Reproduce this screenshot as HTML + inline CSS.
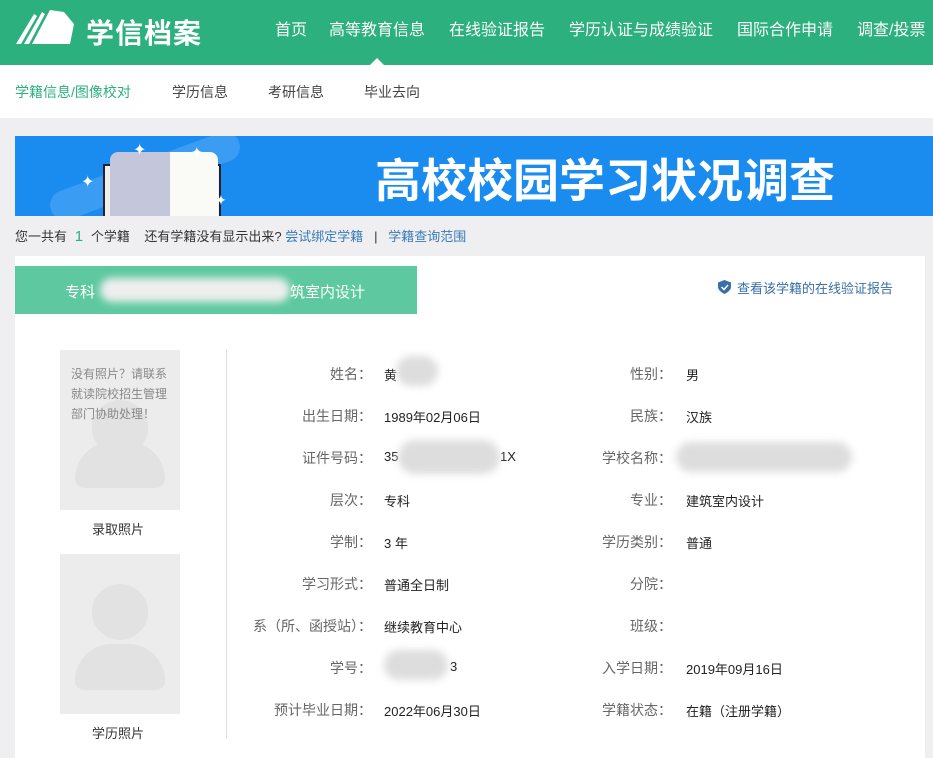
<!DOCTYPE html>
<html><head><meta charset="utf-8"><style>
*{margin:0;padding:0;box-sizing:border-box}
body{width:933px;height:758px;overflow:hidden;background:#efeff1;font-family:"Liberation Sans","Noto Sans CJK SC",sans-serif;position:relative;color:#333}
.a{position:absolute;white-space:nowrap}
#hd{left:0;top:0;width:933px;height:65px;background:#2bb07e}
#sub{left:0;top:65px;width:933px;height:53px;background:#fff}
.nav{top:16px;color:#fff;font-size:16px}
.s{top:82px;font-size:14px;color:#444}
#ban{left:15px;top:136px;width:918px;height:80px;background:#1a8cf0;overflow:hidden}
#card{left:15px;top:256px;width:910px;height:502px;background:#fff}
.l{font-size:14px;color:#666;text-align:right;width:150px}
.v{font-size:13px;color:#222}
.blur{background:#ddd;border-radius:20px;filter:blur(4px)}
.ph{width:120px;height:160px;background:#ececec;overflow:hidden}
</style></head><body>
<div id="hd" class="a">
<svg class="a" style="left:14px;top:8px" width="62" height="40" viewBox="0 0 62 40"><path d="M2 36 L20 6 L23 8 L7 36Z M10 36 L28 4 L31 6 L15 36Z M18 36 L36 2 L50 4 L60 16 L56 36Z" fill="#fff"/></svg>
<div class="a" style="left:86px;top:12px;font-size:28px;color:#fff;font-weight:bold;letter-spacing:1px">学信档案</div>
<div class="a nav" style="left:275px">首页</div>
<div class="a nav" style="left:329px">高等教育信息</div>
<div class="a nav" style="left:449px">在线验证报告</div>
<div class="a nav" style="left:569px">学历认证与成绩验证</div>
<div class="a nav" style="left:737px">国际合作申请</div>
<div class="a nav" style="left:857px">调查/投票</div>
</div>
<div class="a" style="left:370px;top:58px;width:0;height:0;border:7px solid transparent;border-bottom-color:#fff;border-top:0"></div>
<div id="sub" class="a"></div>
<div class="a s" style="left:15px;color:#2bb07e">学籍信息/图像校对</div>
<div class="a s" style="left:172px">学历信息</div>
<div class="a s" style="left:268px">考研信息</div>
<div class="a s" style="left:364px">毕业去向</div>
<div id="ban" class="a">
<div class="a" style="left:30px;top:25px;width:200px;height:30px;background:#3b9cf3;transform:rotate(-20deg);border-radius:15px"></div>
<div class="a" style="left:88px;top:28px;width:118px;height:60px;background:#f2f0e8;border:2px solid #223"></div>
<div class="a" style="left:95px;top:16px;width:60px;height:66px;background:#c4c6dc;border-radius:8px 0 0 0"></div>
<div class="a" style="left:155px;top:16px;width:48px;height:66px;background:#fafaf6;border-radius:0 8px 0 0"></div>
<div class="a" style="left:66px;top:36px;color:#fff;font-size:16px">✦</div>
<div class="a" style="left:118px;top:4px;color:#fff;font-size:16px">✦</div>
<div class="a" style="left:176px;top:8px;color:#fff;font-size:14px">✦</div>
<div class="a" style="left:200px;top:56px;color:#fff;font-size:14px">✦</div>
<div class="a" style="left:360px;top:9px;font-size:46px;font-weight:bold;color:#fff;letter-spacing:0px">高校校园学习状况调查</div>
</div>
<div class="a" style="left:15px;top:226px;font-size:13px;color:#333">您一共有 <span style="color:#2bb07e;font-size:15px">&nbsp;1&nbsp;</span> 个学籍 &nbsp;&nbsp;&nbsp;还有学籍没有显示出来? <span style="color:#3a7bb5">尝试绑定学籍</span> &nbsp;&nbsp;| &nbsp;&nbsp;<span style="color:#3a7bb5">学籍查询范围</span></div>
<div id="card" class="a"></div>
<div class="a" style="left:15px;top:266px;width:402px;height:48px;background:#5ec9a0"></div>
<div class="a" style="left:65px;top:281px;font-size:15px;color:#fff">专科</div>
<div class="a blur" style="left:100px;top:278px;width:190px;height:24px;background:#eee"></div>
<div class="a" style="left:290px;top:281px;font-size:15px;color:#fff">筑室内设计</div>
<svg class="a" style="left:718px;top:280px" width="13" height="14" viewBox="0 0 13 14"><path d="M6.5 0L13 2.5V7C13 11 6.5 14 6.5 14S0 11 0 7V2.5Z" fill="#3a6fa8"/><path d="M3.5 7L6 9.5L10 5" stroke="#fff" stroke-width="1.5" fill="none"/></svg>
<div class="a" style="left:737px;top:278px;font-size:13px;color:#3a6fa8">查看该学籍的在线验证报告</div>
<div class="a ph" style="left:60px;top:350px"><div class="a" style="left:32px;top:50px;width:56px;height:56px;border-radius:50%;background:#e2e2e2"></div><div class="a" style="left:15px;top:92px;width:90px;height:46px;border-radius:40px 40px 10px 10px;background:#e2e2e2"></div><div class="a" style="left:11px;top:14px;font-size:12px;line-height:20px;color:#888;white-space:normal;width:105px">没有照片？请联系就读院校招生管理部门协助处理！</div></div>
<div class="a" style="left:92px;top:519px;font-size:13px">录取照片</div>
<div class="a ph" style="left:60px;top:554px"><div class="a" style="left:32px;top:30px;width:56px;height:56px;border-radius:50%;background:#e2e2e2"></div><div class="a" style="left:15px;top:90px;width:90px;height:46px;border-radius:40px 40px 10px 10px;background:#e2e2e2"></div></div>
<div class="a" style="left:92px;top:723px;font-size:13px">学历照片</div>
<div class="a" style="left:226px;top:350px;width:1px;height:388px;background:#ddd"></div>

<div class="a l" style="left:222px;top:364px">姓名：</div><div class="a v" style="left:384px;top:365px">黄</div><div class="a blur" style="left:396px;top:356px;width:42px;height:30px"></div>
<div class="a l" style="left:222px;top:406px">出生日期：</div><div class="a v" style="left:384px;top:407px">1989年02月06日</div>
<div class="a l" style="left:222px;top:448px">证件号码：</div><div class="a v" style="left:384px;top:449px">35</div><div class="a v" style="left:500px;top:449px">1X</div><div class="a blur" style="left:398px;top:440px;width:102px;height:34px"></div>
<div class="a l" style="left:222px;top:490px">层次：</div><div class="a v" style="left:384px;top:491px">专科</div>
<div class="a l" style="left:222px;top:532px">学制：</div><div class="a v" style="left:384px;top:533px">3 年</div>
<div class="a l" style="left:222px;top:574px">学习形式：</div><div class="a v" style="left:384px;top:575px">普通全日制</div>
<div class="a l" style="left:222px;top:616px">系（所、函授站）：</div><div class="a v" style="left:384px;top:617px">继续教育中心</div>
<div class="a l" style="left:222px;top:658px">学号：</div><div class="a v" style="left:450px;top:659px">3</div><div class="a blur" style="left:384px;top:650px;width:64px;height:30px"></div>
<div class="a l" style="left:222px;top:700px">预计毕业日期：</div><div class="a v" style="left:384px;top:701px">2022年06月30日</div>

<div class="a l" style="left:522px;top:364px">性别：</div><div class="a v" style="left:686px;top:365px">男</div>
<div class="a l" style="left:522px;top:406px">民族：</div><div class="a v" style="left:686px;top:407px">汉族</div>
<div class="a l" style="left:522px;top:448px">学校名称：</div><div class="a blur" style="left:676px;top:442px;width:176px;height:30px"></div>
<div class="a l" style="left:522px;top:490px">专业：</div><div class="a v" style="left:686px;top:491px">建筑室内设计</div>
<div class="a l" style="left:522px;top:532px">学历类别：</div><div class="a v" style="left:686px;top:533px">普通</div>
<div class="a l" style="left:522px;top:574px">分院：</div>
<div class="a l" style="left:522px;top:616px">班级：</div>
<div class="a l" style="left:522px;top:658px">入学日期：</div><div class="a v" style="left:686px;top:659px">2019年09月16日</div>
<div class="a l" style="left:522px;top:700px">学籍状态：</div><div class="a v" style="left:686px;top:701px">在籍（注册学籍）</div>
</body></html>
